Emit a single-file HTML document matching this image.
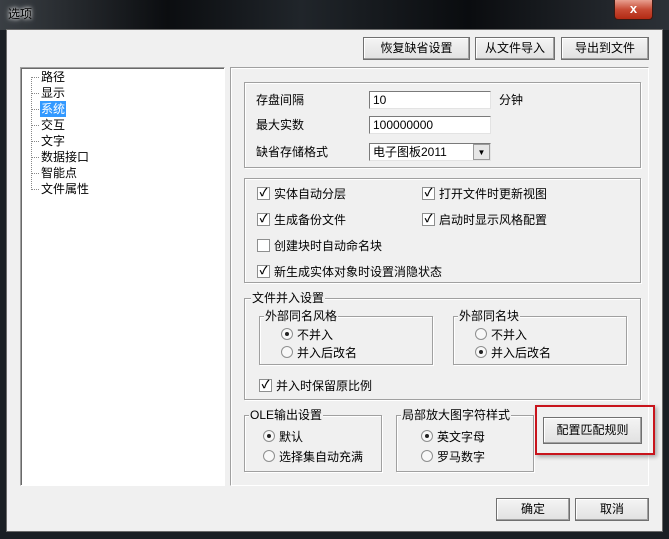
<!DOCTYPE html>
<html><head><meta charset="utf-8"><style>
*{box-sizing:border-box;margin:0;padding:0}
body{width:669px;height:539px;overflow:hidden;background:#1a1f24;font-family:"Liberation Sans","Noto Sans CJK SC","WenQuanYi Zen Hei",sans-serif;font-size:12px;color:#000;position:relative}
.a{position:absolute}
.title{left:0;top:0;width:669px;height:30px;background:linear-gradient(90deg,#3a3f44 0%,#0b0d10 25%,#20252a 45%,#0a0c0f 70%,#2c3137 100%)}
.client{left:6px;top:29px;width:657px;height:503px;background:#f0f0f0;border:1px solid #6b6b6b}
.btn{position:absolute;background:linear-gradient(#f4f4f4,#e1e1e1);border:1px solid #707070;box-shadow:inset -1px -1px 0 #a0a0a0,inset 1px 1px 0 #fff;text-align:center;line-height:21px;font-size:12px}
.grp{position:absolute;border:1px solid #a0a0a0;box-shadow:1px 1px 0 #fff,inset 1px 1px 0 #fff}
.leg{position:absolute;top:-8px;left:6px;background:#f0f0f0;padding:0 1px;line-height:14px}
.inp{position:absolute;background:#fff;border:1px solid #7a7a7a;border-right-color:#e3e3e3;border-bottom-color:#e3e3e3;padding-left:3px;line-height:16px;font-size:12px}
.cb{position:absolute;width:13px;height:13px;border:1px solid #8e8f8f;background:#fff;font-size:11px;line-height:11px;text-align:center;font-weight:bold}
.rd{position:absolute;width:12px;height:12px;border:1px solid #8e8f8f;border-radius:50%;background:#f8f8f8}
.rd.on::after{content:"";position:absolute;left:3px;top:3px;width:4px;height:4px;border-radius:50%;background:#222}
.t{position:absolute;white-space:nowrap;line-height:14px}
</style></head><body>
<div class="a title"></div>
<div class="t" style="left:8px;top:7px;color:#000;text-shadow:0 0 6px #fff,0 0 3px #fff">选项</div>
<div class="a" style="left:614px;top:0;width:39px;height:20px;background:linear-gradient(#e8a090,#c74a34 50%,#b32a14);border:1px solid #3a1a14;border-top:none;border-radius:0 0 4px 4px;color:#fff;text-align:center;font-weight:bold;font-size:13px;line-height:18px">x</div>
<div class="a client"></div>
<div class="btn" style="left:363px;top:37px;width:107px;height:23px">恢复缺省设置</div>
<div class="btn" style="left:475px;top:37px;width:80px;height:23px">从文件导入</div>
<div class="btn" style="left:561px;top:37px;width:88px;height:23px">导出到文件</div>
<div class="a" style="left:20px;top:67px;width:205px;height:419px;background:#fff;border:1px solid #a0a0a0;border-right-color:#fff;border-bottom-color:#fff;box-shadow:inset 1px 1px 0 #696969"></div>
<div class="a" style="left:31px;top:77px;width:0;height:113px;border-left:1px dotted #888"></div>
<div class="t" style="left:41px;top:70px">路径</div>
<div class="t" style="left:41px;top:86px">显示</div>
<div class="t" style="left:40px;top:101px;background:#3399ff;color:#fff;padding:0 1px;line-height:16px">系统</div>
<div class="t" style="left:41px;top:118px">交互</div>
<div class="t" style="left:41px;top:134px">文字</div>
<div class="t" style="left:41px;top:150px">数据接口</div>
<div class="t" style="left:41px;top:166px">智能点</div>
<div class="t" style="left:41px;top:182px">文件属性</div>
<div class="a" style="left:32px;top:77px;width:7px;border-top:1px dotted #888"></div>
<div class="a" style="left:32px;top:93px;width:7px;border-top:1px dotted #888"></div>
<div class="a" style="left:32px;top:109px;width:7px;border-top:1px dotted #888"></div>
<div class="a" style="left:32px;top:125px;width:7px;border-top:1px dotted #888"></div>
<div class="a" style="left:32px;top:141px;width:7px;border-top:1px dotted #888"></div>
<div class="a" style="left:32px;top:157px;width:7px;border-top:1px dotted #888"></div>
<div class="a" style="left:32px;top:173px;width:7px;border-top:1px dotted #888"></div>
<div class="a" style="left:32px;top:189px;width:7px;border-top:1px dotted #888"></div>
<div class="a" style="left:230px;top:67px;width:419px;height:419px;border:1px solid #a0a0a0;border-right-color:#fff;border-bottom-color:#fff;box-shadow:inset 1px 1px 0 #fff"></div>
<div class="grp" style="left:244px;top:82px;width:397px;height:86px"></div>
<div class="t" style="left:256px;top:93px">存盘间隔</div>
<div class="inp" style="left:369px;top:91px;width:122px;height:18px">10</div>
<div class="t" style="left:499px;top:93px">分钟</div>
<div class="t" style="left:256px;top:118px">最大实数</div>
<div class="inp" style="left:369px;top:116px;width:122px;height:18px">100000000</div>
<div class="t" style="left:256px;top:145px">缺省存储格式</div>
<div class="inp" style="left:369px;top:143px;width:122px;height:18px">电子图板2011</div>
<div class="a" style="left:473px;top:144px;width:17px;height:16px;background:#e6e6e6;border:1px solid #9a9a9a;font-size:8px;text-align:center;line-height:15px">▼</div>
<div class="grp" style="left:244px;top:178px;width:397px;height:105px"></div>
<div class="cb" style="left:257px;top:187px">✓</div><div class="t" style="left:274px;top:187px">实体自动分层</div>
<div class="cb" style="left:422px;top:187px">✓</div><div class="t" style="left:439px;top:187px">打开文件时更新视图</div>
<div class="cb" style="left:257px;top:213px">✓</div><div class="t" style="left:274px;top:213px">生成备份文件</div>
<div class="cb" style="left:422px;top:213px">✓</div><div class="t" style="left:439px;top:213px">启动时显示风格配置</div>
<div class="cb" style="left:257px;top:239px"></div><div class="t" style="left:274px;top:239px">创建块时自动命名块</div>
<div class="cb" style="left:257px;top:265px">✓</div><div class="t" style="left:274px;top:265px">新生成实体对象时设置消隐状态</div>
<div class="grp" style="left:244px;top:298px;width:397px;height:102px"><div class="leg">文件并入设置</div></div>
<div class="grp" style="left:259px;top:316px;width:174px;height:49px"><div class="leg" style="left:4px">外部同名风格</div></div>
<div class="rd on" style="left:281px;top:328px"></div><div class="t" style="left:297px;top:328px">不并入</div>
<div class="rd" style="left:281px;top:346px"></div><div class="t" style="left:297px;top:346px">并入后改名</div>
<div class="grp" style="left:453px;top:316px;width:174px;height:49px"><div class="leg" style="left:4px">外部同名块</div></div>
<div class="rd" style="left:475px;top:328px"></div><div class="t" style="left:491px;top:328px">不并入</div>
<div class="rd on" style="left:475px;top:346px"></div><div class="t" style="left:491px;top:346px">并入后改名</div>
<div class="cb" style="left:259px;top:379px">✓</div><div class="t" style="left:276px;top:379px">并入时保留原比例</div>
<div class="grp" style="left:244px;top:415px;width:138px;height:57px"><div class="leg" style="left:4px">OLE输出设置</div></div>
<div class="rd on" style="left:263px;top:430px"></div><div class="t" style="left:279px;top:430px">默认</div>
<div class="rd" style="left:263px;top:450px"></div><div class="t" style="left:279px;top:450px">选择集自动充满</div>
<div class="grp" style="left:396px;top:415px;width:138px;height:57px"><div class="leg" style="left:4px">局部放大图字符样式</div></div>
<div class="rd on" style="left:421px;top:430px"></div><div class="t" style="left:437px;top:430px">英文字母</div>
<div class="rd" style="left:421px;top:450px"></div><div class="t" style="left:437px;top:450px">罗马数字</div>
<div class="a" style="left:535px;top:405px;width:120px;height:50px;border:2px solid #c8141c;box-shadow:2px 2px 4px rgba(0,0,0,.3)"></div>
<div class="btn" style="left:543px;top:417px;width:99px;height:27px;line-height:25px">配置匹配规则</div>
<div class="btn" style="left:496px;top:498px;width:74px;height:23px">确定</div>
<div class="btn" style="left:575px;top:498px;width:74px;height:23px">取消</div>
</body></html>
